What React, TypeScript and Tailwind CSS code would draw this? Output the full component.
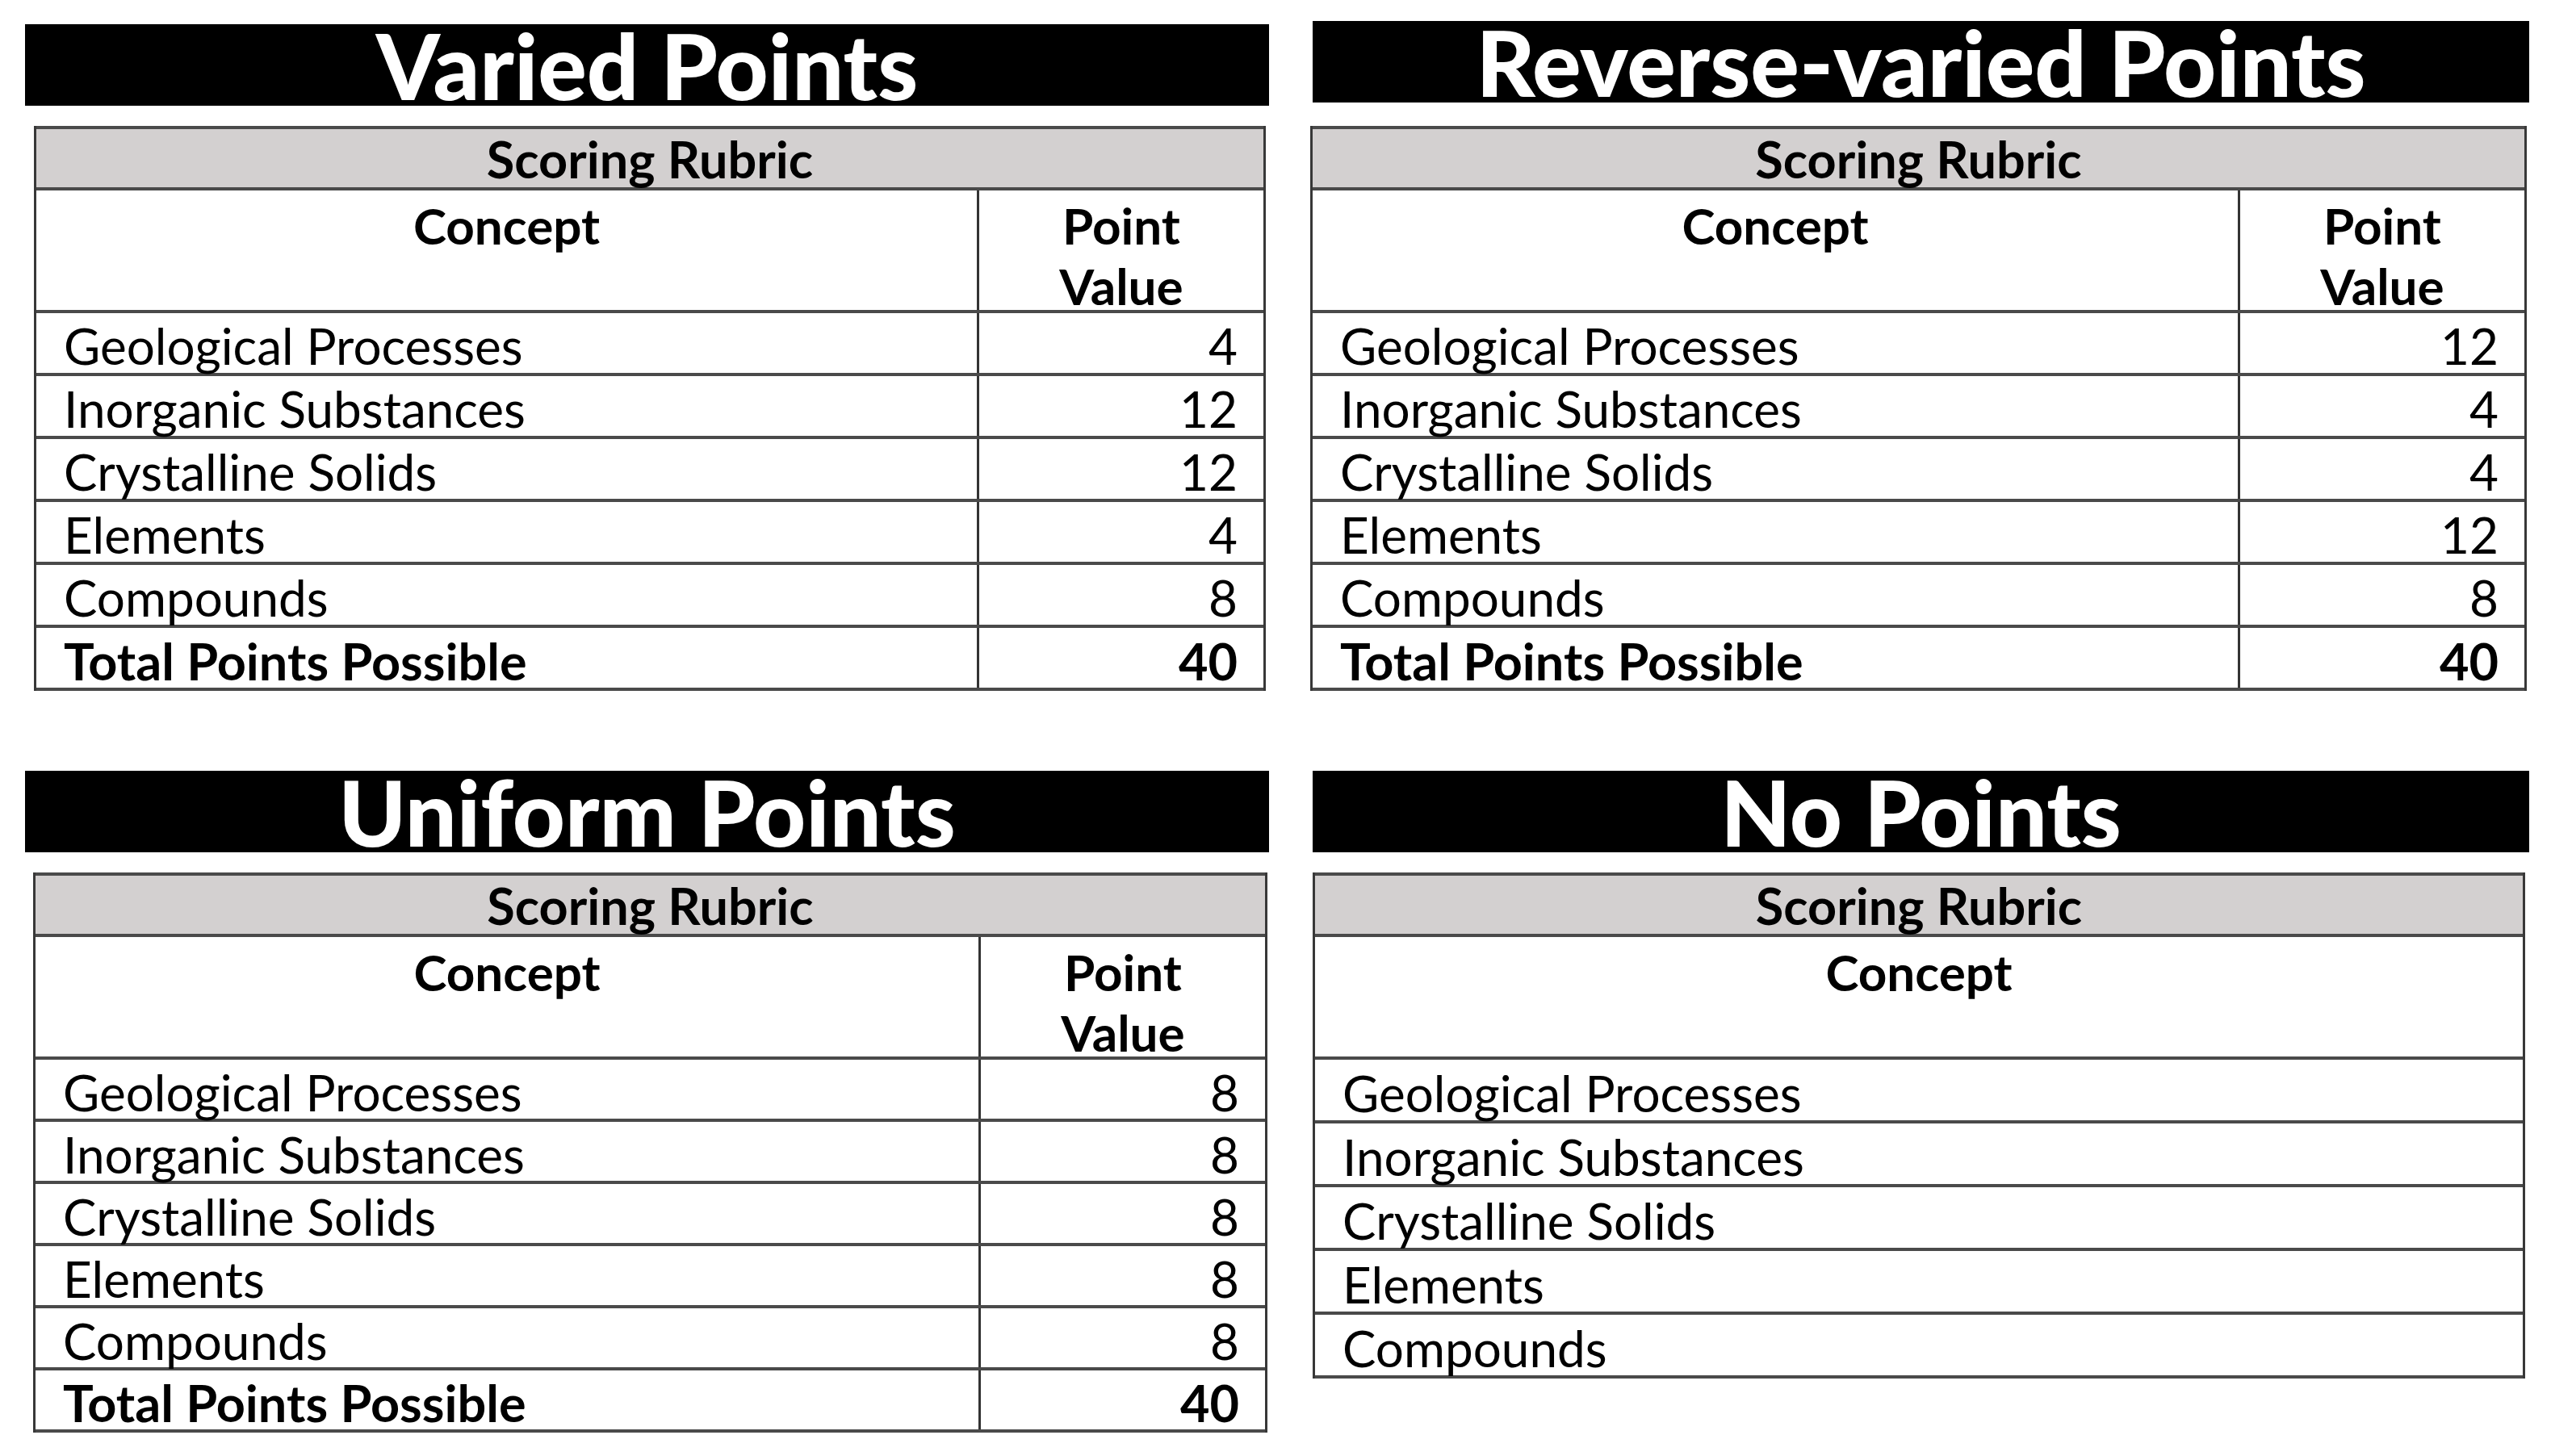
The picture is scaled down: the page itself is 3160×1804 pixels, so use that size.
const font = "font-['Lato','Liberation_Sans',sans-serif]";

type Row = { name: string; value?: number };

const concepts = [
  "Geological Processes",
  "Inorganic Substances",
  "Crystalline Solids",
  "Elements",
  "Compounds",
];

const withValues = (values: number[]): Row[] =>
  concepts.map((name, i) => ({ name, value: values[i] }));

interface IPanelProps {
  title: string;
  rows: Row[];
  total?: number;
  rowHeight: string;
  barClass: string;
  tableClass: string;
}

const Panel = ({ title, rows, total, rowHeight, barClass, tableClass }: IPanelProps) => {
  const showPoints = total !== undefined;

  return (
    <div className="flex flex-col">
      <div className={`h-[101px] bg-black flex items-center justify-center overflow-visible ${barClass}`}>
        <span className="text-white font-black text-[113px] leading-none">{title}</span>
      </div>

      <div className={`mt-[25px] border-x-[3px] border-[#383838] ${tableClass}`}>
        <div className="h-[80px] bg-[#d3d0d0] border-y-4 border-[#4a4a4a] flex items-center justify-center">
          <span className="font-bold text-[63px] leading-none">Scoring Rubric</span>
        </div>

        <div className="flex h-[152px] border-b-4 border-[#4a4a4a]">
          <div className="flex-1 text-center font-bold text-[62px] leading-[75px] pt-[6px]">Concept</div>
          {showPoints && (
            <div className="w-[355px] border-l-[3px] border-[#333] text-center font-bold text-[62px] leading-[75px] pt-[6px]">
              Point
              <br />
              Value
            </div>
          )}
        </div>

        {rows.map((row) => (
          <div key={row.name} className={`flex ${rowHeight} border-b-4 border-[#4a4a4a]`}>
            <div className="flex-1 flex items-center pl-[34px] text-[62px] leading-none pt-[6px]">{row.name}</div>
            {showPoints && (
              <div className="w-[355px] border-l-[3px] border-[#333] flex items-center justify-end pr-[32px] text-[62px] leading-none pt-[6px]">
                {row.value}
              </div>
            )}
          </div>
        ))}

        {showPoints && (
          <div className={`flex ${rowHeight} border-b-4 border-[#4a4a4a] font-bold`}>
            <div className="flex-1 flex items-center pl-[34px] text-[63px] leading-none pt-[6px]">Total Points Possible</div>
            <div className="w-[355px] border-l-[3px] border-[#333] flex items-center justify-end pr-[32px] text-[63px] leading-none pt-[6px]">
              {total}
            </div>
          </div>
        )}
      </div>
    </div>
  );
};

export default function App() {
  return (
    <div className={`w-[3160px] h-[1804px] bg-white text-black ${font} grid grid-cols-[1541px_1510px] grid-rows-[925px_auto] gap-x-[51px] pl-[31px] pt-[30px]`}>
      <Panel
        title="Varied Points"
        rows={withValues([4, 12, 12, 4, 8])}
        total={40}
        rowHeight="h-[78px]"
        barClass=""
        tableClass="ml-[11px] mr-[4px]"
      />
      <Panel
        title="Reverse-varied Points"
        rows={withValues([12, 4, 4, 12, 8])}
        total={40}
        rowHeight="h-[78px]"
        barClass="ml-[3px] -mt-[4px] mb-[4px]"
        tableClass="mr-[3px]"
      />
      <Panel
        title="Uniform Points"
        rows={withValues([8, 8, 8, 8, 8])}
        total={40}
        rowHeight="h-[77px]"
        barClass=""
        tableClass="ml-[10px] mr-[2px]"
      />
      <Panel
        title="No Points"
        rows={concepts.map((name) => ({ name }))}
        rowHeight="h-[79px]"
        barClass="ml-[3px]"
        tableClass="ml-[3px] mr-[5px]"
      />
    </div>
  );
}
